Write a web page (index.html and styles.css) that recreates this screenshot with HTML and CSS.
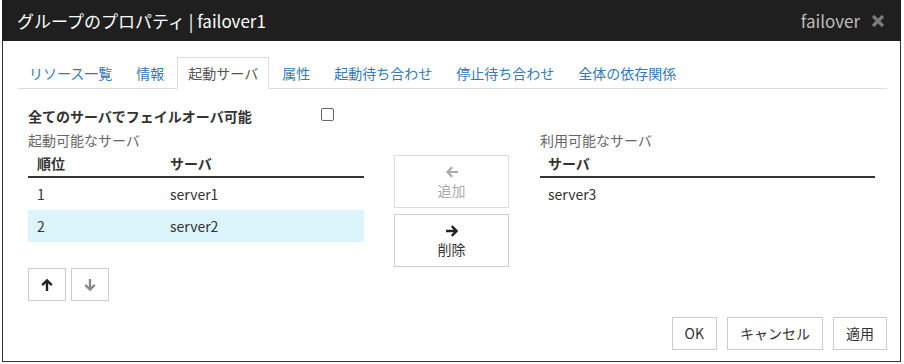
FILE: index.html
```html
<!DOCTYPE html>
<html lang="ja">
<head>
<meta charset="utf-8">
<title>グループのプロパティ</title>
<link rel="stylesheet" href="styles.css">
</head>
<body>
<div class="dialog">
  <div class="header">
    <span class="title">グループのプロパティ | failover1</span>
    <span class="header-right">
      <span class="sub">failover</span>
      <svg class="close" width="14" height="14" viewBox="0 0 14 14"><path d="M2 2L12 12M12 2L2 12" stroke="#7a7a7a" stroke-width="3.2" fill="none"/></svg>
    </span>
  </div>
  <div class="body">
    <ul class="tabs">
      <li class="tab"><span>リソース一覧</span></li>
      <li class="tab"><span>情報</span></li>
      <li class="tab active"><span>起動サーバ</span></li>
      <li class="tab"><span>属性</span></li>
      <li class="tab"><span>起動待ち合わせ</span></li>
      <li class="tab"><span>停止待ち合わせ</span></li>
      <li class="tab"><span>全体の依存関係</span></li>
    </ul>
    <div class="pane">
      <div class="failover-row">
        <span class="failover-label">全てのサーバでフェイルオーバ可能</span>
        <span class="checkbox"></span>
      </div>
      <div class="columns">
        <div class="col col-left">
          <div class="caption">起動可能なサーバ</div>
          <table class="grid">
            <thead><tr><th class="c-order">順位</th><th>サーバ</th></tr></thead>
            <tbody>
              <tr><td class="c-order">1</td><td>server1</td></tr>
              <tr class="selected"><td class="c-order">2</td><td>server2</td></tr>
            </tbody>
          </table>
          <div class="order-btns">
            <button class="btn sq">
              <svg width="14" height="14" viewBox="0 0 14 14"><path d="M7 13V2.5M2.2 7.2L7 2.4L11.8 7.2" stroke="#222" stroke-width="2.4" fill="none"/></svg>
            </button>
            <button class="btn sq">
              <svg width="14" height="14" viewBox="0 0 14 14"><path d="M7 1V11.5M2.2 6.8L7 11.6L11.8 6.8" stroke="#8a8a8a" stroke-width="2.4" fill="none"/></svg>
            </button>
          </div>
        </div>
        <div class="col col-mid">
          <button class="btn move disabled">
            <svg width="14" height="14" viewBox="0 0 14 14"><path d="M13 7H2.5M7.2 2.2L2.4 7L7.2 11.8" stroke="#aaa" stroke-width="2.2" fill="none"/></svg>
            <span>追加</span>
          </button>
          <button class="btn move">
            <svg width="14" height="14" viewBox="0 0 14 14"><path d="M1 7H11.5M6.8 2.2L11.6 7L6.8 11.8" stroke="#222" stroke-width="2.4" fill="none"/></svg>
            <span>削除</span>
          </button>
        </div>
        <div class="col col-right">
          <div class="caption">利用可能なサーバ</div>
          <table class="grid">
            <thead><tr><th>サーバ</th></tr></thead>
            <tbody>
              <tr><td>server3</td></tr>
            </tbody>
          </table>
        </div>
      </div>
    </div>
    <div class="footer">
      <button class="btn foot">OK</button>
      <button class="btn foot">キャンセル</button>
      <button class="btn foot">適用</button>
    </div>
  </div>
</div>
</body>
</html>
```
FILE: styles.css
```css
html, body {
  margin: 0;
  padding: 0;
  background: #fff;
}
body {
  font-family: "Noto Sans CJK JP", "Noto Sans", sans-serif;
  font-size: 14px;
  color: #333;
}
.dialog {
  margin-left: 2px;
  width: 899px;
  height: 362px;
  box-sizing: border-box;
  border: 1px solid #333;
  border-top: 0;
  display: flex;
  flex-direction: column;
}
.header {
  height: 41px;
  background: #1f1f1f;
  display: flex;
  align-items: center;
  justify-content: space-between;
  padding: 0 16px 0 15px;
  margin: 0 -1px;
  font-size: 17px;
  line-height: 41px;
}
.title {
  color: #fff;
}
.header-right {
  display: flex;
  align-items: center;
  gap: 11px;
}
.sub {
  color: #bdbdbd;
}
.close {
  display: block;
}
.body {
  flex: 1;
  display: flex;
  flex-direction: column;
  padding: 0 13px 11px 15px;
}
.tabs {
  list-style: none;
  margin: 16px 0 0 0;
  padding: 0;
  display: flex;
  border-bottom: 1px solid #ddd;
}
.tab {
  height: 30px;
  line-height: 30px;
  padding: 0 10px;
  margin-right: 2px;
  margin-bottom: -1px;
  border: 1px solid transparent;
  color: #337ab7;
  white-space: nowrap;
}
.tab.active {
  border-color: #ddd #ddd transparent #ddd;
  background: #fff;
  color: #555;
}
.pane {
  padding-left: 10px;
}
.failover-row {
  margin-top: 15px;
  height: 24px;
  display: flex;
  align-items: center;
}
.failover-label {
  width: 293px;
  font-weight: 700;
  color: #333;
  line-height: 24px;
}
.checkbox {
  width: 11px;
  height: 11px;
  border: 1px solid #666;
  border-radius: 2px;
  margin-top: -4px;
}
.columns {
  margin-top: 2px;
  display: flex;
  align-items: flex-start;
}
.col-left {
  width: 336px;
}
.col-mid {
  width: 115px;
  margin-left: 30px;
  margin-top: 25px;
  display: flex;
  flex-direction: column;
  gap: 6px;
}
.col-right {
  width: 335px;
  margin-left: 31px;
}
.caption {
  line-height: 20px;
  color: #666;
}
.grid {
  width: 100%;
  border-collapse: separate;
  border-spacing: 0;
}
.grid th {
  height: 26px;
  line-height: 26px;
  padding: 0 8px;
  text-align: left;
  font-weight: 700;
  color: #333;
  border-bottom: 2px solid #333;
}
.grid td {
  height: 32px;
  line-height: 32px;
  padding: 0 8px;
  color: #333;
}
.grid .c-order {
  width: 117px;
  padding-left: 9px;
}
.grid tr.selected td {
  background: #dcf4fc;
}
.order-btns {
  margin-top: 26px;
  display: flex;
  gap: 5px;
}
.btn {
  font: inherit;
  color: #333;
  background: #fff;
  border: 1px solid #ccc;
  border-radius: 0;
  padding: 0;
  margin: 0;
  box-sizing: border-box;
}
.btn svg {
  display: block;
}
.sq {
  width: 38px;
  height: 33px;
  display: flex;
  align-items: center;
  justify-content: center;
}
.move {
  width: 115px;
  height: 53px;
  display: flex;
  flex-direction: column;
  align-items: center;
  justify-content: center;
  padding-top: 2px;
  gap: 1px;
  line-height: 20px;
}
.move.disabled {
  color: #aaa;
  border-color: #ddd;
}
.footer {
  margin-top: auto;
  display: flex;
  justify-content: flex-end;
  gap: 10px;
}
.foot {
  height: 33px;
  padding: 0 12px;
  line-height: 31px;
}
```
